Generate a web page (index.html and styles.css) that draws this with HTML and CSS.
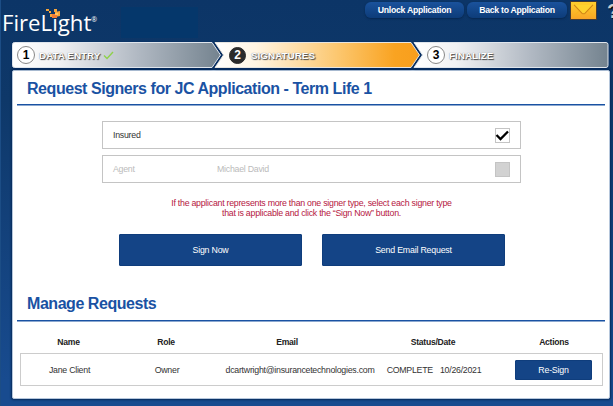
FILE: index.html
```
<!DOCTYPE html>
<html lang="en">
<head>
<meta charset="utf-8">
<title>FireLight</title>
<link rel="stylesheet" href="styles.css">
</head>
<body>
<header class="top">
  <div class="logo"><span class="word">FireLight</span><sup>®</sup>
    <svg class="sparks" width="16" height="12" viewBox="0 0 16 12"><path fill="#f5a53c" d="M0 1h3v2H0zM3 3h2v2H3zM8 1h3v3H8zM4 6h3v3H4zM9 4l5-1v5l-5 1z"/><path fill="#ef7b35" d="M6 6h5v4H6z"/><path fill="#ffc35d" d="M9 5h3v2H9z"/></svg>
  </div>
  <div class="patch"></div>
  <nav class="actions">
    <a class="pill unlock">Unlock Application</a>
    <a class="pill back">Back to Application</a>
    <a class="mail"><svg width="25" height="17" viewBox="0 0 26 18"><path d="M1 16L9 9M25 16l-8-7" stroke="#f9b51d" fill="none"/><path d="M3 3l8.500 9q1.500 1 3 0L23 3" stroke="#cf8415" stroke-width="1.100" fill="#ffd22e"/></svg></a>
    <a class="help">?</a>
  </nav>
</header>
<div class="steps">
  <svg class="rail" width="597" height="26" viewBox="0 0 597 26">
    <defs>
      <linearGradient id="g"><stop offset="0" stop-color="#fff"/><stop offset=".22" stop-color="#f0f1f3"/><stop offset=".6" stop-color="#b1b9c3"/><stop offset="1" stop-color="#74838f"/></linearGradient>
      <linearGradient id="o"><stop offset="0" stop-color="#fff"/><stop offset=".2" stop-color="#fff5e3"/><stop offset=".6" stop-color="#fcc76f"/><stop offset=".88" stop-color="#f9a321"/><stop offset="1" stop-color="#f89e1c"/></linearGradient>
    </defs>
    <path d="M2.500.5H200l8.500 12.500L200 25.500H2.500q-2 0-2-2v-21q0-2 2-2z" fill="url(#g)" stroke="#dfe5ec"/>
    <path d="M203 .5H399l8.500 12.500L399 25.500H203l8.500-12.500z" fill="url(#o)" stroke="#e7e5e0"/>
    <path d="M402 .5H594q2 0 2 2v21q0 2-2 2H402l8.500-12.500z" fill="url(#g)" stroke="#dfe5ec"/>
  </svg>
  <div class="step s1"><b class="num">1</b><span class="label">DATA ENTRY</span><svg width="11" height="9" viewBox="0 0 11 9"><path d="M1 4.500l3 3L10 1" fill="none" stroke="#8fd14b" stroke-width="1.400"/></svg></div>
  <div class="step s2"><b class="num dark">2</b><span class="label">SIGNATURES</span></div>
  <div class="step s3"><b class="num">3</b><span class="label">FINALIZE</span></div>
</div>
<main class="panel">
  <h1>Request Signers for JC Application - Term Life 1</h1>
  <div class="signers">
    <div class="signer"><span class="type">Insured</span><span class="who"></span><span class="box"><svg width="15" height="15" viewBox="0 0 15 15"><path d="M1.500 7l4 4L13 3.500" fill="none" stroke="#000" stroke-width="2.300"/></svg></span></div>
    <div class="signer off"><span class="type">Agent</span><span class="who">Michael David</span><span class="box"></span></div>
  </div>
  <p class="note">If the applicant represents more than one signer type, select each signer type<br>that is applicable and click the “Sign Now” button.</p>
  <div class="buttons"><button class="btn">Sign Now</button><button class="btn">Send Email Request</button></div>
  <h2>Manage Requests</h2>
  <div class="row head"><span>Name</span><span>Role</span><span>Email</span><span>Status/Date</span><span>Actions</span></div>
  <div class="row item"><span>Jane Client</span><span>Owner</span><span class="email">dcartwright@insurancetechnologies.com</span><span class="done"><i>COMPLETE</i><i>10/26/2021</i></span><span><button class="btn small">Re-Sign</button></span></div>
</main>
</body>
</html>
```
FILE: styles.css
```
* { box-sizing: border-box; }
body { margin: 0; width: 613px; height: 406px; overflow: hidden; font-family: "Liberation Sans", Arial, sans-serif; font-size: 8.8px; letter-spacing: -0.26px; color: #333; background: linear-gradient(#0c3567 0, #0e3869 100px, #184b8f 380px, #184b8f); border-left: 1px solid #1c4d85; display: flex; flex-direction: column; }
.top { height: 42px; display: flex; flex: none; letter-spacing: 0; }
.logo { position: relative; flex: none; width: 120px; padding: 6px 0 0 1px; color: #fff; white-space: nowrap; font-family: "Open Sans", sans-serif; line-height: 34px; }
.word { font-size: 22.2px; }
.logo sup { font-size: 7px; line-height: 0; vertical-align: 9px; }
.sparks { position: absolute; left: 45px; top: 8px; }
.patch { flex: none; width: 77px; height: 31px; margin-top: 7px; background: #05376b; }
.actions { flex: 1; display: flex; align-items: flex-start; padding: 2px 0 0 167px; min-width: 0; }
.pill { flex: none; height: 16px; line-height: 17px; border-radius: 6px; color: #fff; font-weight: bold; font-size: 8.7px; letter-spacing: -0.27px; text-align: center; background: linear-gradient(#1a529c, #0d3c79); box-shadow: 0 1px 2px #062650; white-space: nowrap; }
.unlock { width: 99px; margin-right: 3px; }
.back { width: 100px; margin-right: 4px; }
.mail { flex: none; width: 25px; height: 17px; background: linear-gradient(#ffcf2d, #f9a526); box-shadow: 0 0 0 1px #493c32; }
.mail svg { display: block; }
.help { flex: none; margin: -2px 0 0 11px; font: bold 20px/22px "Liberation Sans", sans-serif; color: #c7cbd0; text-shadow: 1px 1px 1px #000; }
.steps { position: relative; flex: none; width: 597px; height: 26px; margin-left: 11px; display: flex; letter-spacing: 0; }
.rail { position: absolute; left: 0; top: 0; overflow: visible; filter: drop-shadow(0 1px 1px #03265a); }
.step { position: relative; display: flex; align-items: center; }
.s1 { width: 200px; padding-left: 5px; }
.s2 { width: 199px; padding-left: 17px; }
.s3 { flex: 1; padding-left: 16px; }
.num { width: 18px; height: 18px; border: 1px solid #888; border-radius: 50%; background: #fff; color: #000; font-size: 12px; line-height: 16px; text-align: center; margin-right: 4px; }
.dark { width: 17px; height: 17px; line-height: 15px; background: #2b2b2b; border-color: #2b2b2b; color: #fff; margin-right: 5px; }
.label { color: #fff; font-weight: bold; font-size: 9.9px; text-shadow: 1px 1px 1px #444, 0 0 1px #777; margin-top: 1px; }
.step svg { margin-left: 3px; }
.panel { flex: none; width: 598px; height: 329px; margin: 2px 0 0 11px; background: #fff; border: 1px solid #b6c7dc; border-radius: 2px; box-shadow: 0 0 2px 1px #062a5a; padding: 0 4px; }
h1, h2 { margin: 0; height: 34px; padding: 7px 0 0 10px; font-size: 16px; letter-spacing: -0.45px; line-height: 21px; color: #1a52a3; border-bottom: 1px solid #1a52a3; white-space: nowrap; box-shadow: 0 1px 0 #8ba8d0; }
.signers { width: 419px; margin: 16px 0 0 85px; display: grid; gap: 6px; }
.signer { height: 28px; border: 1px solid #c4c4c4; padding: 0 10px; display: flex; align-items: center; }
.type { width: 104px; }
.who { flex: 1; }
.off { color: #bbb; }
.box { width: 15px; height: 15px; border: 1px solid #c4c4c4; }
.box svg { display: block; margin: -1px; }
.off .box { background: #d2d2d2; }
.note { margin: 15px 0 0; padding-left: 1px; height: 20px; text-align: center; line-height: 10px; color: #b5173f; white-space: nowrap; }
.buttons { display: flex; gap: 20px; margin: 16px 0 0 102px; }
.btn { width: 183px; height: 32px; padding: 0; background: #144486; color: #fff; font: 8.8px "Liberation Sans", Arial, sans-serif; letter-spacing: -0.2px; border: 1px solid #0f3d7c; border-radius: 1px; }
h2 { margin-top: 21px; padding-top: 6px; }
.row { display: grid; grid-template-columns: 97px 98px 144px 148px 94px; align-items: center; text-align: center; white-space: nowrap; margin: 0 2px 0 3px; }
.row > span { justify-self: center; }
.head { height: 32px; padding-top: 10px; font-weight: bold; font-size: 8.6px; color: #222; }
.item { height: 33px; border: 1px solid #ccc; }
.item .email { padding-left: 22px; margin-right: -2px; }
.done { display: flex; gap: 7px; }
.done i { font-style: normal; }
.small { display: block; width: 77px; height: 20px; margin-left: -3px; }
```
